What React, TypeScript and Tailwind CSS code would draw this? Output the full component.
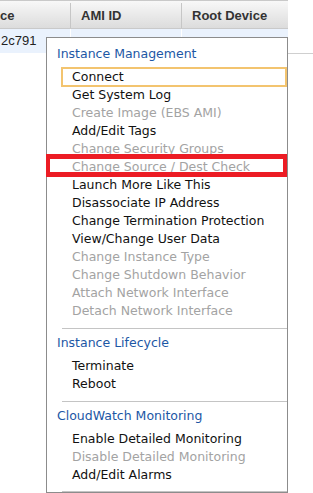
import React from 'react';

type Item = { label: string; disabled?: boolean; focused?: boolean };
type Section = { title: string; items: Item[]; gapBelow: string };

const sections: Section[] = [
  {
    title: 'Instance Management',
    gapBelow: 'pb-[8px]',
    items: [
      { label: 'Connect', focused: true },
      { label: 'Get System Log' },
      { label: 'Create Image (EBS AMI)', disabled: true },
      { label: 'Add/Edit Tags' },
      { label: 'Change Security Groups', disabled: true },
      { label: 'Change Source / Dest Check', disabled: true },
      { label: 'Launch More Like This' },
      { label: 'Disassociate IP Address' },
      { label: 'Change Termination Protection' },
      { label: 'View/Change User Data' },
      { label: 'Change Instance Type', disabled: true },
      { label: 'Change Shutdown Behavior', disabled: true },
      { label: 'Attach Network Interface', disabled: true },
      { label: 'Detach Network Interface', disabled: true },
    ],
  },
  {
    title: 'Instance Lifecycle',
    gapBelow: 'pb-[8px]',
    items: [{ label: 'Terminate' }, { label: 'Reboot' }],
  },
  {
    title: 'CloudWatch Monitoring',
    gapBelow: 'pb-[7px]',
    items: [
      { label: 'Enable Detailed Monitoring' },
      { label: 'Disable Detailed Monitoring', disabled: true },
      { label: 'Add/Edit Alarms' },
    ],
  },
];

const MenuRow: React.FC<{ item: Item }> = ({ item }) => {
  if (item.focused) {
    return (
      <div className="ml-[14px] -my-px h-[20px] border-2 border-[#f3c46f] pl-[9px] leading-[16px] text-[#111]">
        {item.label}
      </div>
    );
  }
  return (
    <div
      className={`ml-[14px] h-[18px] pl-[11px] leading-[18px] ${
        item.disabled ? 'text-[#a3a3a3]' : 'text-[#111]'
      }`}
    >
      {item.label}
    </div>
  );
};

export default function App() {
  return (
    <div className="relative h-[493px] w-[313px] overflow-hidden bg-white font-['Liberation_Sans',Arial,sans-serif]">
      {/* table header */}
      <div className="flex h-[29px] w-[288px] border-t border-b border-[#c9c9c9] bg-gradient-to-b from-[#f8f8f8] to-[#dcdcdc] pt-[2px] text-[13px] font-bold text-[#333]">
        <div className="flex w-[71px] items-center border-r border-[#c6c6c6] pl-0">ce</div>
        <div className="flex w-[111px] items-center border-r border-[#c6c6c6] pl-[10px]">AMI ID</div>
        <div className="flex flex-1 items-center pl-[10px]">Root Device</div>
      </div>
      {/* selected row */}
      <div className="flex">
        <div className="flex h-[24px] w-[288px] bg-[#eaf2fd] text-[13px] text-[#222]">
          <div className="flex w-[71px] items-center border-r border-white pl-px">2c791</div>
          <div className="w-[111px] border-r border-white" />
          <div className="flex-1" />
        </div>
        <div className="h-[25px] flex-1 border-b border-[#cfcfcf]" />
      </div>

      {/* actions menu */}
      <div className="absolute left-[46px] top-[37px] h-[456px] w-[242px] overflow-hidden border border-[#8c8c8c] bg-white font-['DejaVu_Sans',Verdana,sans-serif] text-[12.5px]">
        {sections.map((s, i) => (
          <div key={s.title} className={`${i > 0 ? 'ml-[15px] border-t border-[#c4c4c4]' : ''}`}>
            <div className={`${i > 0 ? '-ml-[15px] pt-[5px]' : 'pt-[7px]'} ${s.gapBelow}`}>
              <div className="mb-[5px] h-[18px] pl-[10px] leading-[18px] text-[#1c57a5]">{s.title}</div>
              {s.items.map((it) => (
                <MenuRow key={it.label} item={it} />
              ))}
            </div>
          </div>
        ))}
        <div className="ml-[15px] border-t border-[#c4c4c4]" />
      </div>

      {/* red annotation box */}
      <div className="absolute left-[46px] top-[154px] h-[23px] w-[241px] border-x-4 border-y-[5px] border-[#ec1c24]" />
    </div>
  );
}
